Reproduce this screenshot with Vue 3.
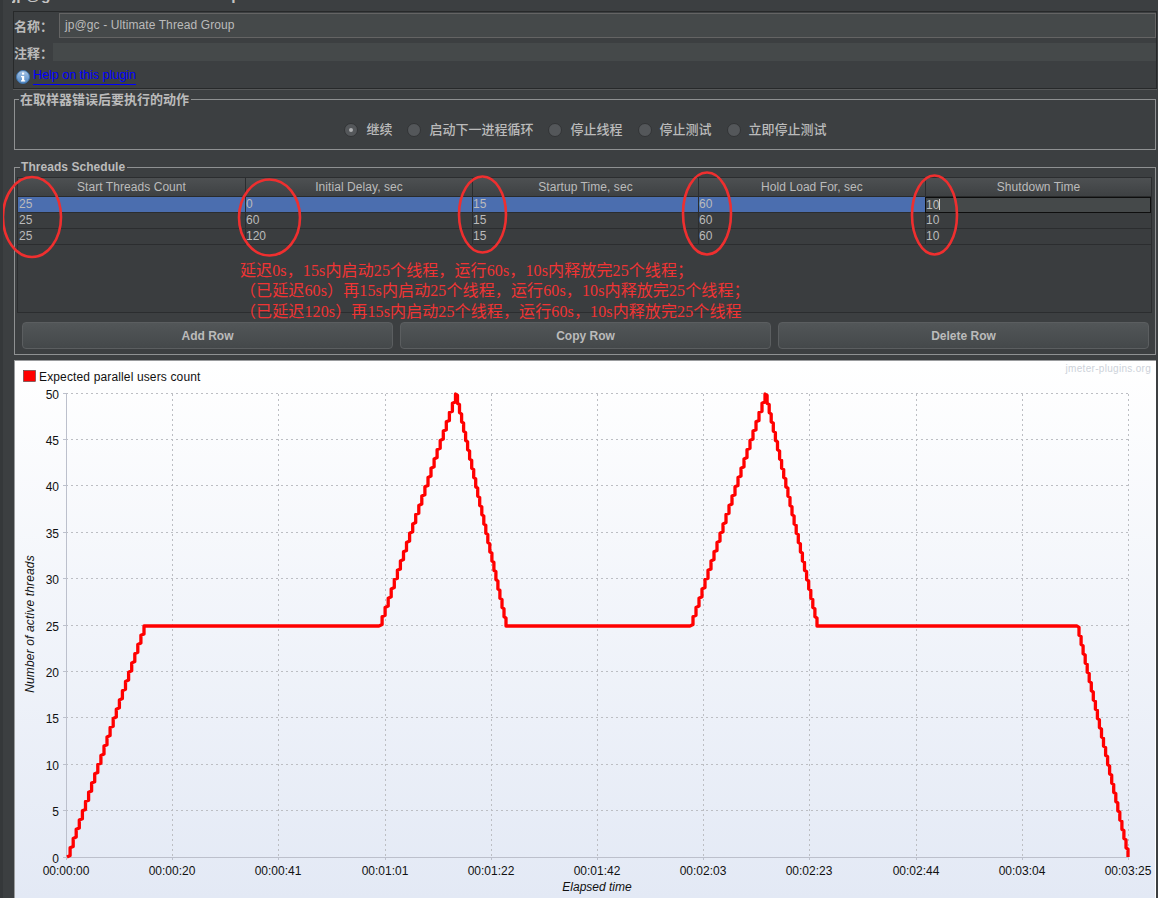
<script setup>
const headers = ['Start Threads Count', 'Initial Delay, sec', 'Startup Time, sec', 'Hold Load For, sec', 'Shutdown Time']
const rows = [
  ['25', '0', '15', '60', '10'],
  ['25', '60', '15', '60', '10'],
  ['25', '120', '15', '60', '10']
]
const radios = ['继续', '启动下一进程循环', '停止线程', '停止测试', '立即停止测试']
const buttons = ['Add Row', 'Copy Row', 'Delete Row']
const notes = [
  '延迟0s，15s内启动25个线程，运行60s，10s内释放完25个线程；',
  '（已延迟60s）再15s内启动25个线程，运行60s，10s内释放完25个线程；',
  '（已延迟120s）再15s内启动25个线程，运行60s，10s内释放完25个线程'
]
const marks = [
  { cx: 32, cy: 217, rx: 29, ry: 40 },
  { cx: 269.5, cy: 217.5, rx: 30.5, ry: 38 },
  { cx: 482.5, cy: 214.5, rx: 23.5, ry: 38 },
  { cx: 707, cy: 213.5, rx: 24, ry: 41 },
  { cx: 934.5, cy: 215, rx: 22.5, ry: 39.5 }
]

const yTicks = [0, 5, 10, 15, 20, 25, 30, 35, 40, 45, 50].map(v => ({ v, y: Math.floor(857 - v * 9.28) + 0.5 }))
const xLabels = ['00:00:00', '00:00:20', '00:00:41', '00:01:01', '00:01:22', '00:01:42', '00:02:03', '00:02:23', '00:02:44', '00:03:04', '00:03:25']
const xTicks = xLabels.map((t, i) => ({ t, x: Math.round(66 + i * 106.2) + 0.5 }))

const knots = [[67, 857], [144, 626], [379, 626], [455.5, 394], [506, 626], [690, 626], [765, 394], [817, 626], [1077, 626], [1128, 857]]
let d = `M${knots[0][0]} ${knots[0][1]}`
for (let i = 1; i < knots.length; i++) {
  const [x0, y0] = knots[i - 1]
  const [x1, y1] = knots[i]
  if (y0 === y1) { d += `L${x1} ${y1}`; continue }
  const n = 25
  for (let s = 1; s <= n; s++) {
    const xa = x0 + ((x1 - x0) * s) / n
    const ya = y0 + ((y1 - y0) * s) / n
    d += `L${xa.toFixed(1)} ${(y0 + ((y1 - y0) * (s - 1)) / n + (y1 - y0) / n * 0.15).toFixed(1)}L${xa.toFixed(1)} ${ya.toFixed(1)}`
  }
}
const linePath = d
</script>

<template>
  <div class="page">
    <div class="title"><span>jp@gc - Ultimate Thread Group</span></div>

    <section class="namePanel">
      <div class="nameRow">
        <label class="lbl">名称：</label>
        <div class="nameInput">jp@gc - Ultimate Thread Group</div>
      </div>
      <div class="commentRow">
        <label class="lbl">注释：</label>
        <div class="commentInput"></div>
      </div>
      <div class="helpRow">
        <svg class="info" width="14" height="14" viewBox="0 0 14 14">
          <defs>
            <linearGradient id="infoFill" x1="0" y1="0" x2="0" y2="1">
              <stop offset="0" stop-color="#a9c6e6" />
              <stop offset="1" stop-color="#4f88c6" />
            </linearGradient>
          </defs>
          <circle cx="7" cy="7" r="6.5" fill="url(#infoFill)" stroke="#3f74ad" />
          <rect x="6" y="2.6" width="2.2" height="2" fill="#fff" />
          <path d="M5 6h3.2v4.2H9.2v1.2H5v-1.2h1V7.2H5z" fill="#fff" />
        </svg>
        <a class="help">Help on this plugin</a>
      </div>
    </section>

    <fieldset class="group errorGroup">
      <legend>在取样器错误后要执行的动作</legend>
      <div class="radios">
        <div v-for="(r, i) in radios" :key="r" class="radio">
          <span class="dot" :class="{ on: i === 0 }"></span>
          <span>{{ r }}</span>
        </div>
      </div>
    </fieldset>

    <fieldset class="group scheduleGroup">
      <legend class="latin">Threads Schedule</legend>
      <div class="table">
        <div class="thead">
          <div v-for="h in headers" :key="h" class="th">{{ h }}</div>
        </div>
        <div v-for="(r, ri) in rows" :key="ri" class="tr" :class="{ selected: ri === 0 }">
          <div v-for="(c, ci) in r" :key="ci" class="td" :class="{ editing: ri === 0 && ci === 4 }">
            {{ c }}<i v-if="ri === 0 && ci === 4" class="caret"></i>
          </div>
        </div>
      </div>
      <div class="buttons">
        <button v-for="b in buttons" :key="b" class="btn">{{ b }}</button>
      </div>
    </fieldset>

    <div class="chart">
      <svg class="plot" width="1140" height="537" viewBox="15 361 1140 537">
        <defs>
          <linearGradient id="chartBg" x1="0" y1="0" x2="0" y2="1">
            <stop offset="0" stop-color="#ffffff" />
            <stop offset="1" stop-color="#e3e9f5" />
          </linearGradient>
        </defs>
        <rect x="15" y="361" width="1140" height="537" fill="url(#chartBg)" />
        <rect x="23.5" y="370.5" width="12" height="11" fill="#ff0000" stroke="#444" stroke-width="0.6" />
        <text x="39" y="381" class="tick legendText">Expected parallel users count</text>
        <text x="1151" y="372" class="brand" text-anchor="end">jmeter-plugins.org</text>

        <g v-for="t in yTicks" :key="t.v">
          <line v-if="t.v > 0" x1="66" :y1="t.y" x2="1128" :y2="t.y" class="grid" />
          <line x1="63" :y1="t.y" x2="66" :y2="t.y" class="axis" />
          <text x="59" :y="t.y + 5" class="tick" text-anchor="end">{{ t.v }}</text>
        </g>
        <g v-for="(t, i) in xTicks" :key="t.t">
          <line v-if="i > 0" :x1="t.x" y1="394" :x2="t.x" y2="857" class="grid" />
          <line :x1="t.x" y1="857" :x2="t.x" y2="860" class="axis" />
          <text :x="t.x - 0.5" y="875" class="tick" text-anchor="middle">{{ t.t }}</text>
        </g>
        <line x1="66.5" y1="393.5" x2="66.5" y2="857" class="axis" />
        <line x1="66" y1="857.5" x2="1128" y2="857.5" class="axis" />

        <path :d="linePath" fill="none" stroke="#ff0000" stroke-width="3.3" stroke-linejoin="round" />

        <text x="597" y="891" class="tick italic" text-anchor="middle">Elapsed time</text>
        <text transform="translate(34 624) rotate(-90)" class="tick italic spaced" text-anchor="middle">Number of active threads</text>
      </svg>
    </div>

    <svg class="marks" width="1158" height="270" viewBox="0 0 1158 270">
      <ellipse v-for="(m, i) in marks" :key="i" :cx="m.cx" :cy="m.cy" :rx="m.rx" :ry="m.ry" fill="none" stroke="#ef2f2f" stroke-width="2.6" />
    </svg>
    <div class="notes">
      <div v-for="n in notes" :key="n">{{ n }}</div>
    </div>
  </div>
</template>

<style scoped>
.page {
  position: relative;
  width: 1158px;
  height: 898px;
  overflow: hidden;
  background: #3c3f41;
  color: #bbbbbb;
  font-family: "Liberation Sans", "Noto Sans CJK SC", sans-serif;
  font-size: 12px;
  box-sizing: border-box;
  border-left: 3px solid #35383a;
  padding-left: 10px;
  display: flex;
  flex-direction: column;
}
.title {
  height: 11px;
  overflow: hidden;
  flex: none;
  margin-left: -1px;
}
.title span {
  display: block;
  margin-top: -16px;
  font-size: 15.5px;
  font-weight: bold;
  line-height: 22px;
  color: #c4c4c4;
  white-space: nowrap;
}
.namePanel {
  flex: none;
  height: 78px;
  box-sizing: border-box;
  border: 1px solid #27292a;
  box-shadow: 0 1px 0 #565859;
  margin-right: 1px;
}
.lbl {
  flex: none;
  width: 39px;
  font-family: "Noto Sans CJK SC", sans-serif;
  font-size: 13px;
  font-weight: bold;
  color: #bbbbbb;
  white-space: nowrap;
}
.nameRow {
  display: flex;
  align-items: center;
  height: 25px;
  margin-top: 1px;
}
.nameInput {
  margin-left: 6px;
  flex: 1;
  height: 25px;
  box-sizing: border-box;
  border: 1px solid #646464;
  background: #45494a;
  padding-left: 5px;
  line-height: 22px;
  font-size: 12px;
  letter-spacing: 0.1px;
}
.commentRow {
  display: flex;
  align-items: center;
  height: 18px;
  margin-top: 5px;
}
.commentInput {
  flex: 1;
  height: 18px;
  background: #45494a;
}
.helpRow {
  display: flex;
  align-items: flex-start;
  margin-top: 7px;
  margin-left: 2px;
}
.info {
  margin-top: 2px;
  margin-right: 3px;
}
.help {
  color: #0000ff;
  font-size: 12.5px;
  line-height: 15px;
  border-bottom: 1px solid #0000ff;
  padding-bottom: 1px;
}
.group {
  margin: 0 2px 0 1px;
  padding: 0;
  border: 1px solid #8f9192;
  flex: none;
  min-width: 0;
  box-sizing: border-box;
}
.group legend {
  margin-left: 4px;
  padding: 0 2px 0 1px;
  font-family: "Noto Sans CJK SC", sans-serif;
  font-size: 13px;
  line-height: 14px;
  font-weight: bold;
  color: #bbbbbb;
}
.group legend.latin {
  font-family: "Liberation Sans", sans-serif;
  font-size: 12px;
  letter-spacing: 0.05px;
  margin-left: 3px;
  padding-left: 1px;
}
.errorGroup {
  margin-top: 3px;
  height: 58px;
}
.radios {
  display: flex;
  justify-content: center;
  align-items: center;
  gap: 15px;
  margin: 13px 0 0 1px;
  height: 18px;
}
.radio {
  display: flex;
  align-items: center;
  gap: 8px;
  font-family: "Noto Sans CJK SC", sans-serif;
  font-size: 13px;
  font-weight: 500;
}
.dot {
  width: 12px;
  height: 12px;
  margin-top: 4px;
  border-radius: 50%;
  background: #54575a;
  border: 1px solid #323436;
  position: relative;
  box-sizing: content-box;
}
.dot.on::after {
  content: "";
  position: absolute;
  left: 4px;
  top: 4px;
  width: 4px;
  height: 4px;
  border-radius: 50%;
  background: #aeb0b2;
}
.scheduleGroup {
  margin-top: 10px;
  height: 195px;
  padding: 3px 3px 0 2px;
}
.table {
  height: 136px;
  box-sizing: border-box;
  border: 1px solid #2b2d2f;
  background: #3a3d3f;
}
.thead,
.tr {
  display: grid;
  grid-template-columns: 227px 227px 226px 227px 1fr;
}
.thead {
  height: 18px;
  background: linear-gradient(#4d5052, #3e4143);
  border-bottom: 1px solid #292b2c;
  box-sizing: content-box;
}
.th {
  text-align: center;
  line-height: 19px;
  font-size: 12px;
  letter-spacing: 0.06px;
  border-left: 1px solid #2b2d2f;
}
.th:first-child {
  border-left: 0;
}
.tr {
  height: 16px;
  box-sizing: border-box;
  border-bottom: 1px solid #2b2d2f;
}
.tr.selected {
  background: #4b6eaf;
}
.td {
  font-size: 12px;
  line-height: 15px;
  padding-left: 0;
  border-left: 1px solid #2b2d2f;
  box-sizing: border-box;
}
.td:first-child {
  border-left: 0;
  padding-left: 1px;
}
.td.editing {
  background: #45494a;
  border: 1px solid #0e0e0e;
  line-height: 14px;
  height: 16px;
}
.caret {
  display: inline-block;
  width: 1px;
  height: 11px;
  background: #cccccc;
  vertical-align: -1px;
}
.buttons {
  display: flex;
  gap: 7px;
  margin: 9px 3px 0 5px;
}
.btn {
  flex: 1;
  height: 27px;
  border: 1px solid #5b5e60;
  border-radius: 4px;
  background: linear-gradient(#525658, #44484a);
  color: #bbbbbb;
  font-family: "Liberation Sans", sans-serif;
  font-size: 12px;
  font-weight: bold;
  padding: 0;
}
.chart {
  flex: none;
  margin: 5px 2px 0 1px;
  height: 538px;
  border-top: 1px solid #9a9c9e;
  border-left: 1px solid #9a9c9e;
  background: #ffffff;
}
.plot {
  display: block;
}
.tick {
  font-family: "Liberation Sans", sans-serif;
  font-size: 12px;
  fill: #111111;
}
.legendText {
  letter-spacing: 0.14px;
}
.spaced {
  letter-spacing: 0.15px;
}
.italic {
  font-style: italic;
}
.brand {
  font-family: "Liberation Sans", sans-serif;
  font-size: 10px;
  letter-spacing: 0.3px;
  fill: #cdd2da;
}
.grid {
  stroke: #bcbec3;
  stroke-width: 1;
  stroke-dasharray: 2 3;
}
.axis {
  stroke: #bcc0cc;
  stroke-width: 1;
}
.marks {
  position: absolute;
  left: -3px;
  top: 0;
  pointer-events: none;
}
.notes {
  position: absolute;
  left: 237px;
  top: 260.5px;
  color: #f03434;
  font-family: "Liberation Serif", "Noto Sans CJK SC", serif;
  font-size: 16px;
  letter-spacing: 0.12px;
  line-height: 20.5px;
  white-space: nowrap;
}
</style>
